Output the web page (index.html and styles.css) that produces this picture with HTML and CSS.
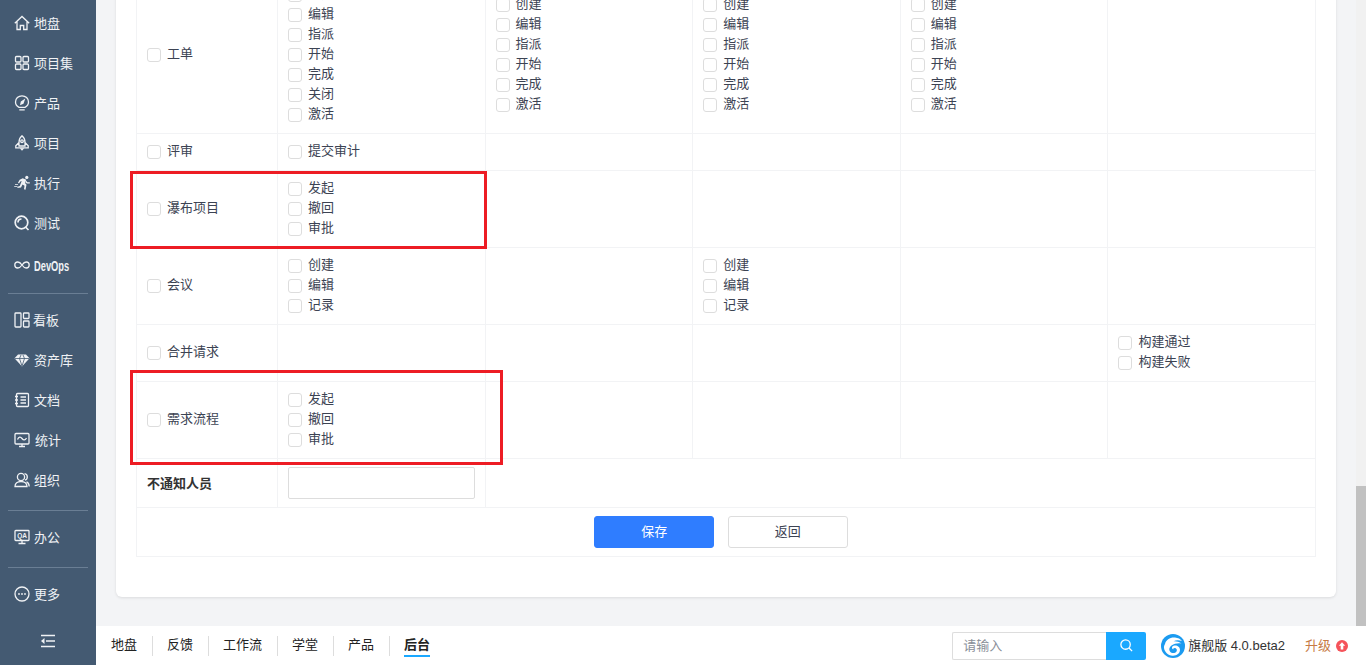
FILE: index.html
```html
<!DOCTYPE html>
<html lang="zh-CN">
<head>
    <meta charset="UTF-8">
    <meta name="viewport" content="width=device-width, initial-scale=1.0">
    <title>通知设置</title>
    <link rel="stylesheet" href="styles.css">
</head>
<body>
    <nav class="sidebar">
        <ul class="nav-group nav-first">
            <li><svg viewBox="0 0 16 16"><path d="M.8 8.200 8 1.500 15.200 8.200M3 6.500V14.500H6.300V10.500H9.700V14.500H13V6.500"/></svg><span>地盘</span></li>
            <li><svg viewBox="0 0 16 16"><rect x="1.500" y="1.500" width="5.500" height="5.500" rx="1"/><rect x="9" y="1.500" width="5.500" height="5.500" rx="1"/><rect x="1.500" y="9" width="5.500" height="5.500" rx="1"/><rect x="9" y="9" width="5.500" height="5.500" rx="1"/></svg><span>项目集</span></li>
            <li><svg viewBox="0 0 16 16"><path d="M5 12.300C2.800 11.200 1.500 9.300 1.500 7 1.500 3.500 4.400.8 8 .8s6.500 2.700 6.500 6.200c0 2.300-1.300 4.200-3.500 5.300ZM5.300 14.800H10.700"/><path class="fill" d="M11.300 3.500 9.500 8.800 6 10.300 6.800 6.500Z"/></svg><span>产品</span></li>
            <li><svg viewBox="0 0 16 16"><path d="M8 .8C5.800 2.500 5 5 5 7.500V11H11V7.500C11 5 10.200 2.500 8 .8ZM5 7.500 1.800 10.800 1.800 12.800H14.200V10.800L11 7.500"/><circle cx="8" cy="6.200" r="1.300"/><path class="fill" d="M5.800 13.200H10.200L8 15.800Z"/></svg><span>项目</span></li>
            <li><svg viewBox="0 0 16 16"><circle class="fill" cx="12.800" cy="2.400" r="1.600"/><path class="fill" d="M8.700 3.300 12.300 4.800 11 8 12.500 9.800 11.500 14.800 10 14.300 10.500 10.800 8.500 9.500 7 12.500 3 13 4.200 11.500 5.800 11 7.700 6 6.300 6.500 5 8.500 4 7.800 5.700 4.800ZM12.300 5.800 13.400 7.300 15.800 7.300V8.500L12.800 8.600 11.500 7.300ZM.2 11H3.500V11.800H.2ZM1 9H4V9.800H1Z"/></svg><span>执行</span></li>
            <li><svg viewBox="0 0 16 16"><circle class="thick" cx="7.500" cy="7.500" r="6.300"/><path class="thick" d="M11.500 12 14.500 15M4 7.500C4 5.500 5.500 4 7.500 4"/></svg><span>测试</span></li>
            <li class="nav-devops"><svg viewBox="0 0 16 16"><path d="M8 8C6.500 5.800 5.400 5 3.800 5 2.100 5 .8 6.300.8 8s1.300 3 3 3C5.400 11 6.500 10.200 8 8c1.500-2.200 2.600-3 4.200-3 1.700 0 3 1.300 3 3s-1.300 3-3 3C10.600 11 9.500 10.200 8 8Z"/></svg><span class="devops-text">DevOps</span></li>
        </ul>
        <ul class="nav-group">
            <li class="nav-narrow"><svg viewBox="0 0 16 16"><rect x="1" y="1" width="6" height="14" rx=".8"/><rect x="9.500" y="1" width="5.500" height="5.500" rx=".8"/><rect x="9.500" y="9" width="5.500" height="6" rx=".8"/></svg><span>看板</span></li>
            <li><svg viewBox="0 0 16 16"><path class="fill" d="M4 2.500H12L15.500 6.300 8 14.500.5 6.300Z"/><path class="cut" d="M1 6.500H15M5.500 6.500 8 14 10.500 6.500M5.500 6.500 7 3M10.500 6.500 9 3"/></svg><span>资产库</span></li>
            <li><svg viewBox="0 0 16 16"><path d="M3.500 1.500H13.500A1 1 0 0 1 14.500 2.500V13.500A1 1 0 0 1 13.500 14.500H3.500A1 1 0 0 1 2.500 13.500V2.500A1 1 0 0 1 3.500 1.500ZM1 4.500H4M1 8H4M1 11.500H4M6.500 5H12M6.500 8H12M6.500 11H12"/></svg><span>文档</span></li>
            <li class="nav-wide"><svg viewBox="0 0 16 16"><rect x="1" y="1.500" width="14" height="10.500" rx="1"/><path d="M3.500 7.500C5 4.500 6.500 4.500 8 6.500S11 8.500 12.500 6M8 12V14.500M5 14.500H11"/></svg><span>统计</span></li>
            <li><svg viewBox="0 0 16 16"><circle cx="7" cy="5" r="3.600"/><path d="M1 14.500C1 11.500 3.500 9.500 7 9.500S13 11.500 13 14.500ZM10.500 1.700C12.300 2 13.300 3.300 13.300 5S12.300 7.800 11 8.200M12.500 9.800C14.200 10.500 15.200 12 15.200 14.500"/></svg><span>组织</span></li>
        </ul>
        <ul class="nav-group">
            <li><svg viewBox="0 0 16 16"><rect x="1" y="1.500" width="14" height="10" rx=".8"/><path d="M8 11.500V14.500M4.500 14.500H11.500"/><text x="8" y="9" class="qa">QA</text></svg><span>办公</span></li>
        </ul>
        <ul class="nav-group">
            <li><svg viewBox="0 0 16 16"><circle cx="8" cy="8" r="7"/><circle class="fill" cx="5" cy="8" r=".9"/><circle class="fill" cx="8" cy="8" r=".9"/><circle class="fill" cx="11" cy="8" r=".9"/></svg><span>更多</span></li>
        </ul>
        <div class="collapse"><svg viewBox="0 0 16 16"><path class="thick" d="M1 2.500H15M6 8H15M1 13.500H15"/><path class="fill" d="M1 8 4.500 5V11Z"/></svg></div>
    </nav>

    <div class="page">
        <div class="view">
            <div class="content">
                <section class="card">
                    <table class="notify-table">
                        <colgroup>
                            <col class="col-name">
                            <col class="col-opt">
                            <col class="col-opt">
                            <col class="col-opt">
                            <col class="col-opt">
                            <col class="col-opt">
                        </colgroup>
                        <tr>
                            <td><label class="opt"><input type="checkbox">工单</label></td>
                            <td>
                                <label class="opt"><input type="checkbox">创建</label>
                                <label class="opt"><input type="checkbox">编辑</label>
                                <label class="opt"><input type="checkbox">指派</label>
                                <label class="opt"><input type="checkbox">开始</label>
                                <label class="opt"><input type="checkbox">完成</label>
                                <label class="opt"><input type="checkbox">关闭</label>
                                <label class="opt"><input type="checkbox">激活</label>
                            </td>
                            <td>
                                <label class="opt"><input type="checkbox">创建</label>
                                <label class="opt"><input type="checkbox">编辑</label>
                                <label class="opt"><input type="checkbox">指派</label>
                                <label class="opt"><input type="checkbox">开始</label>
                                <label class="opt"><input type="checkbox">完成</label>
                                <label class="opt"><input type="checkbox">激活</label>
                            </td>
                            <td>
                                <label class="opt"><input type="checkbox">创建</label>
                                <label class="opt"><input type="checkbox">编辑</label>
                                <label class="opt"><input type="checkbox">指派</label>
                                <label class="opt"><input type="checkbox">开始</label>
                                <label class="opt"><input type="checkbox">完成</label>
                                <label class="opt"><input type="checkbox">激活</label>
                            </td>
                            <td>
                                <label class="opt"><input type="checkbox">创建</label>
                                <label class="opt"><input type="checkbox">编辑</label>
                                <label class="opt"><input type="checkbox">指派</label>
                                <label class="opt"><input type="checkbox">开始</label>
                                <label class="opt"><input type="checkbox">完成</label>
                                <label class="opt"><input type="checkbox">激活</label>
                            </td>
                            <td></td>
                        </tr>
                        <tr>
                            <td><label class="opt"><input type="checkbox">评审</label></td>
                            <td><label class="opt"><input type="checkbox">提交审计</label></td>
                            <td></td><td></td><td></td><td></td>
                        </tr>
                        <tr>
                            <td><label class="opt"><input type="checkbox">瀑布项目</label></td>
                            <td>
                                <label class="opt"><input type="checkbox">发起</label>
                                <label class="opt"><input type="checkbox">撤回</label>
                                <label class="opt"><input type="checkbox">审批</label>
                            </td>
                            <td></td><td></td><td></td><td></td>
                        </tr>
                        <tr>
                            <td><label class="opt"><input type="checkbox">会议</label></td>
                            <td>
                                <label class="opt"><input type="checkbox">创建</label>
                                <label class="opt"><input type="checkbox">编辑</label>
                                <label class="opt"><input type="checkbox">记录</label>
                            </td>
                            <td></td>
                            <td>
                                <label class="opt"><input type="checkbox">创建</label>
                                <label class="opt"><input type="checkbox">编辑</label>
                                <label class="opt"><input type="checkbox">记录</label>
                            </td>
                            <td></td><td></td>
                        </tr>
                        <tr>
                            <td><label class="opt"><input type="checkbox">合并请求</label></td>
                            <td></td><td></td><td></td><td></td>
                            <td>
                                <label class="opt"><input type="checkbox">构建通过</label>
                                <label class="opt"><input type="checkbox">构建失败</label>
                            </td>
                        </tr>
                        <tr>
                            <td><label class="opt"><input type="checkbox">需求流程</label></td>
                            <td>
                                <label class="opt"><input type="checkbox">发起</label>
                                <label class="opt"><input type="checkbox">撤回</label>
                                <label class="opt"><input type="checkbox">审批</label>
                            </td>
                            <td></td><td></td><td></td><td></td>
                        </tr>
                        <tr>
                            <th>不通知人员</th>
                            <td><input class="text-input" type="text"></td>
                            <td colspan="4"></td>
                        </tr>
                        <tr>
                            <td class="actions" colspan="6">
                                <button class="btn btn-primary" type="button">保存</button>
                                <button class="btn" type="button">返回</button>
                            </td>
                        </tr>
                    </table>
                </section>
            </div>
            <div class="scrollbar"><div class="scrollbar-thumb"></div></div>
            <div class="mark mark-waterfall"></div>
            <div class="mark mark-flow"></div>
        </div>

        <footer class="footer">
            <ul class="tabs">
                <li>地盘</li>
                <li>反馈</li>
                <li>工作流</li>
                <li>学堂</li>
                <li>产品</li>
                <li class="tab-active"><span>后台</span></li>
            </ul>
            <div class="search">
                <input type="text" placeholder="请输入">
                <button type="button"><svg viewBox="0 0 16 16"><circle cx="7" cy="7" r="5"/><path d="M10.700 10.700 14 14"/></svg></button>
            </div>
            <div class="version">
                <svg viewBox="0 0 24 24"><circle class="logo-bg" cx="12" cy="12" r="12"/><path class="logo-swirl" d="M4 10C5 5.500 9.500 3 14 3.500 17 3.800 19.500 5 21 7 18 5.800 15 6 12.500 7.200 15 6.900 18 7.500 20.500 9.500 17 8.800 13.500 9.500 10.500 11.500 8.500 13 7.500 15.500 9 17.500 10.500 19.500 14 19.500 15.500 17.500 16.500 16 15.500 14 13.500 14 12.500 14 12 14.800 12.300 15.500 10.500 15 10.500 12.500 12.500 11.700 15.500 10.700 19 12.500 19 15.800 19 19.500 15.500 22 11.500 21.700 7 21.300 3.500 18 3 14 2.800 12.500 3.200 11.200 4 10Z"/></svg>
                <span>旗舰版 4.0.beta2</span>
            </div>
            <div class="upgrade"><span>升级</span><svg viewBox="0 0 12 12"><circle class="upgrade-bg" cx="6" cy="6" r="6"/><path class="upgrade-arrow" d="M6 2.300 9.200 5.800H7.300V9.500H4.700V5.800H2.800Z"/></svg></div>
        </footer>
    </div>
</body>
</html>
```

FILE: styles.css
```css
* {
    margin: 0;
    padding: 0;
    box-sizing: border-box;
}

html, body {
    height: 100%;
    overflow: hidden;
}

body {
    display: flex;
    font-family: "Liberation Sans", "Noto Sans CJK SC", sans-serif;
    font-size: 13px;
    color: #3c4353;
    background-color: #f3f4f6;
}

ul {
    list-style: none;
}

/* Left navigation */
.sidebar {
    position: relative;
    flex: 0 0 96px;
    min-width: 0;
    background-color: #445a72;
    color: #f0f2f5;
}

.nav-group {
    margin: 0 8px;
    padding: 6px 0 10px;
    border-bottom: 1px solid #6a7e94;
}

.nav-group:last-of-type {
    border-bottom: 0;
}

.nav-first {
    padding: 3px 0 6px;
}

.nav-group li {
    display: flex;
    align-items: center;
    gap: 4px;
    height: 40px;
    padding-left: 6px;
}

.nav-group li span {
    margin-top: -2px;
}

.nav-group li.nav-devops {
    height: 44px;
}

.nav-group .nav-wide {
    gap: 5px;
}

.nav-group .nav-narrow {
    gap: 3px;
}

.nav-group li .devops-text {
    flex: 0 0 35px;
    margin-top: 0;
    font-weight: bold;
    font-size: 15px;
    white-space: nowrap;
    transform: scaleX(.62);
    transform-origin: left center;
}

.sidebar svg {
    flex: none;
    width: 16px;
    height: 16px;
    fill: none;
    stroke: #f0f2f5;
    stroke-width: 1.3;
}

.sidebar svg .fill {
    fill: #f0f2f5;
    stroke: none;
}

.sidebar svg .thick {
    stroke-width: 1.7;
}

.sidebar svg .cut {
    stroke: #445a72;
    stroke-width: .8;
}

.sidebar svg .qa {
    fill: #f0f2f5;
    stroke: none;
    font-size: 6.500px;
    font-weight: bold;
    text-anchor: middle;
}

.collapse {
    position: absolute;
    left: 40px;
    bottom: 13px;
}

/* Page */
.page {
    flex: 1;
    min-width: 0;
    display: flex;
    flex-direction: column;
}

.view {
    position: relative;
    flex: 1;
    min-height: 0;
    display: flex;
    overflow: hidden;
}

.content {
    flex: 1;
    min-width: 0;
    padding: 0 20px;
}

.scrollbar {
    flex: 0 0 10px;
    background-color: #f1f1f1;
}

.scrollbar-thumb {
    height: 140px;
    margin-top: 486px;
    background-color: #c1c1c1;
}

.card {
    margin-top: -44px;
    padding: 20px 20px 40px;
    background-color: #fff;
    border-radius: 6px;
    box-shadow: 0 1px 3px rgba(0, 0, 0, .1);
}

/* Notification table */
.notify-table {
    width: 100%;
    table-layout: fixed;
    border-collapse: collapse;
}

.col-name {
    width: 141px;
}

.notify-table td,
.notify-table th {
    padding: 8px 10px;
    border: 1px solid #f2f3f5;
    text-align: left;
    vertical-align: middle;
}

.notify-table th {
    padding-bottom: 10px;
    color: #333;
    font-weight: bold;
}

.opt {
    display: flex;
    align-items: flex-start;
    gap: 6px;
    height: 20px;
    line-height: 18px;
}

.opt input {
    appearance: none;
    flex: none;
    width: 14px;
    height: 14px;
    margin-top: 3px;
    background-color: #fff;
    border: 1px solid #ddd;
    border-radius: 3px;
}

.text-input {
    display: block;
    width: 187px;
    height: 32px;
    border: 1px solid #ddd;
    border-radius: 2px;
}

.notify-table .actions {
    padding-right: 20px;
    text-align: center;
}

.btn {
    width: 120px;
    height: 32px;
    margin: 0 5px;
    padding-bottom: 3px;
    background-color: #fff;
    border: 1px solid #ddd;
    border-radius: 3px;
    color: #3c4353;
    font: inherit;
}

.btn-primary {
    background-color: #2f7dff;
    border-color: #2f7dff;
    color: #fff;
}

/* Red marks drawn over the table */
.mark {
    position: absolute;
    left: 34px;
    border: 3px solid #ed1c24;
}

.mark-waterfall {
    top: 171px;
    width: 357px;
    height: 78px;
}

.mark-flow {
    top: 370px;
    width: 373px;
    height: 95px;
}

/* Bottom bar */
.footer {
    flex: 0 0 39px;
    display: flex;
    align-items: center;
    padding-left: 15px;
    background-color: #fff;
    color: #222;
}

.tabs {
    display: flex;
    flex: 1;
    align-items: center;
}

.tabs li {
    height: 20px;
    line-height: 17px;
    padding: 0 14.500px;
    border-right: 1px solid #ddd;
}

.tabs li:first-child {
    padding-left: 0;
}

.tabs .tab-active {
    border-right: 0;
    padding-right: 0;
    font-weight: bold;
}

.tab-active span {
    display: block;
    height: 21px;
    border-bottom: 2px solid #1aa8ff;
}

.search {
    display: flex;
    width: 194px;
    height: 28px;
}

.search input {
    flex: 1;
    min-width: 0;
    padding-left: 10px;
    border: 1px solid #ddd;
    border-right: 0;
    border-radius: 2px 0 0 2px;
    font: inherit;
}

.search input::placeholder {
    color: #8a8f99;
}

.search button {
    flex: 0 0 40px;
    display: flex;
    align-items: center;
    justify-content: center;
    background-color: #1aa8ff;
    border: 0;
    border-radius: 0 2px 2px 0;
}

.search svg {
    width: 15px;
    height: 15px;
    fill: none;
    stroke: #fff;
    stroke-width: 1.4;
}

.version {
    display: flex;
    align-items: center;
    gap: 3px;
    margin-left: 15px;
    color: #333;
}

.version span {
    margin-top: -2px;
}

.version svg {
    width: 24px;
    height: 24px;
}

.logo-bg {
    fill: #1c9bf0;
}

.logo-swirl {
    fill: #fff;
}

.upgrade {
    display: flex;
    align-items: center;
    gap: 5px;
    margin: 0 18px 0 20px;
    color: #c77a45;
}

.upgrade span {
    margin-top: -3px;
}

.upgrade svg {
    width: 12px;
    height: 12px;
}

.upgrade-bg {
    fill: #f5535a;
}

.upgrade-arrow {
    fill: #fff;
}
```
